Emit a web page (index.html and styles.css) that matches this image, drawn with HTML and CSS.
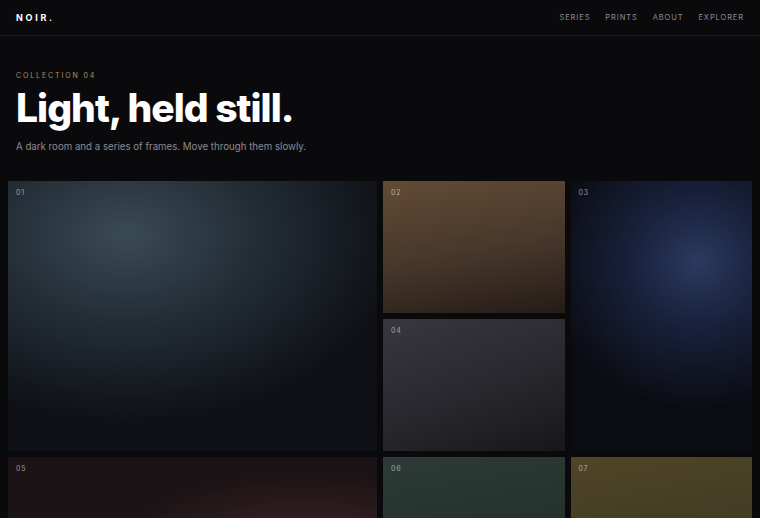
FILE: index.html
```html
<!DOCTYPE html>
<html lang="en">
<head>
    <meta charset="UTF-8">
    <meta name="viewport" content="width=device-width, initial-scale=1.0">
    <title>Noir — Collection 04</title>
    <link rel="stylesheet" href="styles.css">
</head>
<body>
    <header class="topbar">
        <div class="brand">NOIR.</div>
        <nav class="nav">
            <a href="#">Series</a>
            <a href="#">Prints</a>
            <a href="#">About</a>
            <a href="#">Explorer</a>
        </nav>
    </header>

    <section class="hero">
        <p class="eyebrow">Collection 04</p>
        <h1>Light, held still.</h1>
        <p class="lede">A dark room and a series of frames. Move through them slowly.</p>
    </section>

    <main class="gallery">
        <div class="frame frame-1"><span>01</span></div>
        <div class="frame frame-2"><span>02</span></div>
        <div class="frame frame-3"><span>03</span></div>
        <div class="frame frame-4"><span>04</span></div>
        <div class="frame frame-5"><span>05</span></div>
        <div class="frame frame-6"><span>06</span></div>
        <div class="frame frame-7"><span>07</span></div>
    </main>
</body>
</html>
```

FILE: styles.css
```css
body {
    margin: 0;
    background-color: #0a0a0d;
    color: #ffffff;
    font-family: 'Inter', 'Liberation Sans', sans-serif;
}

.topbar {
    height: 36px;
    padding: 0 16px;
    display: flex;
    align-items: center;
    justify-content: space-between;
    border-bottom: 1px solid #1b1b1f;
    box-sizing: border-box;
}

.brand {
    font-size: 9px;
    font-weight: 700;
    letter-spacing: 0.3em;
}

.nav {
    display: flex;
    gap: 15px;
}

.nav a {
    color: #8c8c93;
    text-decoration: none;
    font-size: 7.5px;
    letter-spacing: 0.12em;
    text-transform: uppercase;
}

.hero {
    padding: 35px 16px 29px;
}

.eyebrow {
    margin: 0;
    color: #b98c5c;
    font-size: 7px;
    letter-spacing: 0.27em;
    text-transform: uppercase;
}

h1 {
    margin: 6px 0 0;
    font-size: 39px;
    font-weight: 800;
    line-height: 1.15;
    letter-spacing: -0.025em;
}

.lede {
    margin: 10px 0 0;
    color: #8a8a91;
    font-size: 9.7px;
}

.gallery {
    padding: 0 8px;
    display: grid;
    grid-template-columns: repeat(4, 1fr);
    grid-auto-rows: 132px;
    gap: 6px;
}

.frame {
    padding: 8px;
}

.frame span {
    display: block;
    font-size: 7px;
    line-height: 1;
    letter-spacing: 0.12em;
    color: rgba(255, 255, 255, 0.55);
}

.frame-1 {
    grid-column: span 2;
    grid-row: span 2;
    background: radial-gradient(ellipse 75% 70% at 32% 20%, #3a4a55 0%, #242e37 45%, #0e1015 100%);
}

.frame-2 {
    background: linear-gradient(170deg, #624b35 0%, #46362a 55%, #251c17 100%);
}

.frame-3 {
    grid-row: span 2;
    background: radial-gradient(ellipse 85% 55% at 70% 30%, #2b3a5f 0%, #18203a 45%, #0b0c12 100%);
}

.frame-4 {
    background: linear-gradient(160deg, #38373f 0%, #2a292f 50%, #17171b 100%);
}

.frame-5 {
    grid-column: span 2;
    background: radial-gradient(ellipse 60% 90% at 80% 100%, #55332f 0%, #321f20 55%, #1b1315 100%);
}

.frame-6 {
    background: linear-gradient(170deg, #2c3b35 0%, #1f2b27 100%);
}

.frame-7 {
    background: linear-gradient(170deg, #4f4628 0%, #3a331f 100%);
}
```
